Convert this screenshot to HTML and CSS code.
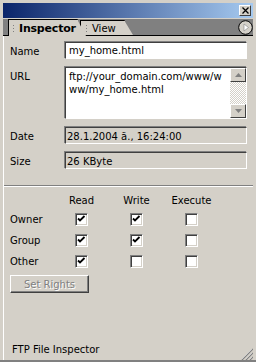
FILE: index.html
```html
<!DOCTYPE html>
<html>
<head>
<meta charset="utf-8">
<link rel="stylesheet" href="styles.css">
</head>
<body>
<div class="window">
  <div class="titlebar">
    <div class="close"><svg width="7" height="7" viewBox="0 0 7 7"><path d="M0.5 0.5 L6.5 6.5 M6.5 0.5 L0.5 6.5" stroke="#000" stroke-width="1.3"/></svg></div>
  </div>
  <div class="tabstrip">
    <div class="tab active"><span class="grip"></span>Inspector</div>
    <div class="tab inactive"><span class="grip"></span>View</div>
    <div class="spacer"></div>
    <div class="menu-btn"><svg width="15" height="15" viewBox="0 0 15 15"><circle cx="7.5" cy="7.5" r="6.8" fill="#d4d0c8" stroke="#000" stroke-width="1"/><path d="M6 4 L10.5 7.5 L6 11 Z" fill="#fff" stroke="#808080" stroke-width="0.6"/></svg></div>
  </div>
  <div class="panel">
    <div class="row">
      <div class="label">Name</div>
      <div class="field input">my_home.html</div>
    </div>
    <div class="row">
      <div class="label">URL</div>
      <div class="field textarea">
        <div class="ta-text">ftp://your_domain.com/www/w<br>ww/my_home.html</div>
        <div class="scroll">
          <div class="sbtn"><svg width="7" height="4" viewBox="0 0 7 4"><path d="M3.5 0 L7 4 L0 4 Z" fill="#808080"/></svg></div>
          <div class="track"></div>
          <div class="sbtn"><svg width="7" height="4" viewBox="0 0 7 4"><path d="M0 0 L7 0 L3.5 4 Z" fill="#808080"/></svg></div>
        </div>
      </div>
    </div>
    <div class="row">
      <div class="label">Date</div>
      <div class="field ro">28.1.2004 ã., 16:24:00</div>
    </div>
    <div class="row">
      <div class="label">Size</div>
      <div class="field ro">26 KByte</div>
    </div>
    <div class="sep"></div>
    <div class="perms">
      <div></div><div class="hd">Read</div><div class="hd">Write</div><div class="hd">Execute</div>
      <div class="rl">Owner</div><div class="cb on"></div><div class="cb on"></div><div class="cb"></div>
      <div class="rl">Group</div><div class="cb on"></div><div class="cb on"></div><div class="cb"></div>
      <div class="rl">Other</div><div class="cb on"></div><div class="cb"></div><div class="cb"></div>
    </div>
    <div class="btn">Set Rights</div>
    <div class="grow"></div>
    <div class="status">FTP File Inspector</div>
    <div class="grip-corner"><svg width="12" height="12" viewBox="0 0 12 12"><path d="M11 1 L1 11 M11 5 L5 11 M11 9 L9 11" stroke="#fff" stroke-width="1"/><path d="M12 1 L1 12 M12 5 L5 12 M12 9 L9 12" stroke="#808080" stroke-width="1.2"/></svg></div>
  </div>
</div>
</body>
</html>
```
FILE: styles.css
```css
html, body {
  margin: 0;
  padding: 0;
  background: #d4d0c8;
}
body {
  width: 256px;
  height: 362px;
  font-family: "DejaVu Sans", sans-serif;
  font-size: 10px;
  line-height: 13px;
  color: #000;
}
.window {
  box-sizing: border-box;
  width: 256px;
  height: 362px;
  padding: 3px 3px 0 3px;
  display: flex;
  flex-direction: column;
  border-bottom: 2px solid #808080;
}
.titlebar {
  height: 15px;
  background: linear-gradient(to right, #0a246a, #a6caf0);
  display: flex;
  justify-content: flex-end;
  align-items: center;
  padding-right: 2px;
  flex: none;
}
.close {
  width: 10px;
  height: 9px;
  background: #d4d0c8;
  border-top: 1px solid #fff;
  border-left: 1px solid #fff;
  border-right: 1px solid #404040;
  border-bottom: 1px solid #404040;
  display: flex;
  align-items: center;
  justify-content: center;
}
.tabstrip {
  margin-top: 1px;
  height: 16px;
  background: #808080;
  border-bottom: 1px solid #000;
  display: flex;
  align-items: flex-end;
  padding-left: 5px;
  flex: none;
  position: relative;
}
.tab {
  position: relative;
  height: 14px;
  background: #d4d0c8;
  border-top: 1px solid #000;
  border-left: 1px solid #000;
  display: flex;
  align-items: center;
  padding-left: 3px;
  font-size: 11px;
}
.tab.active {
  font-weight: bold;
  width: 66px;
  z-index: 2;
  height: 16px;
  margin-bottom: -1px;
  letter-spacing: -0.2px;
}
.tab.active::after, .tab.inactive::after {
  content: "";
  position: absolute;
  top: -1px;
  right: -8px;
  width: 9px;
  height: 100%;
  background: #d4d0c8;
  border-top: 1px solid #000;
  clip-path: polygon(0 0, 0 100%, 100% 100%, 0 0);
}
.tab.inactive {
  width: 40px;
  margin-left: 2px;
  padding-left: 4px;
  font-size: 10px;
}
.grip {
  width: 3px;
  height: 9px;
  margin-right: 4px;
  background-image: radial-gradient(circle, #808080 0.8px, transparent 1px);
  background-size: 3px 3px;
}
.spacer { flex: 1; }
.menu-btn {
  align-self: center;
  margin-right: 0;
  height: 15px;
}
.panel {
  flex: 1;
  display: flex;
  flex-direction: column;
  border-left: 1px solid #fff;
  padding: 6px 6px 2px 6px;
  position: relative;
}
.row {
  display: flex;
  align-items: flex-start;
  margin-bottom: 8px;
}
.label {
  width: 55px;
  padding-top: 3px;
}
.field {
  flex: 1;
  box-sizing: border-box;
  border-top: 1px solid #404040;
  border-left: 1px solid #404040;
  border-right: 1px solid #fff;
  border-bottom: 1px solid #fff;
  box-shadow: -1px -1px 0 #808080, 1px 1px 0 #d4d0c8;
  padding: 1px 3px;
  height: 17px;
  white-space: nowrap;
  overflow: hidden;
}
.input, .textarea { background: #fff; }
.textarea {
  height: 52px;
  display: flex;
  padding: 0;
}
.ta-text {
  flex: 1;
  padding: 2px 3px;
  line-height: 13px;
}
.scroll {
  width: 16px;
  display: flex;
  flex-direction: column;
}
.sbtn {
  height: 14px;
  box-sizing: border-box;
  background: #d4d0c8;
  border-top: 1px solid #fff;
  border-left: 1px solid #fff;
  border-right: 1px solid #404040;
  border-bottom: 1px solid #404040;
  display: flex;
  align-items: center;
  justify-content: center;
}
.track {
  flex: 1;
  background-color: #fff;
  background-image: conic-gradient(#d4d0c8 25%, #fff 0 50%, #d4d0c8 0 75%, #fff 0);
  background-size: 2px 2px;
}
.ro { background: #d4d0c8; padding: 2px 1px 1px 1px; }
.sep {
  height: 0;
  border-top: 1px solid #808080;
  border-bottom: 1px solid #fff;
  margin: 8px -6px 7px -6px;
}
.perms {
  display: grid;
  grid-template-columns: 44px 55px 55px 55px;
  grid-template-rows: 15px 21px 21px 21px;
  align-items: center;
  justify-items: center;
}
.perms .rl { justify-self: start; }
.perms .hd { align-self: start; }
.cb {
  width: 13px;
  height: 13px;
  box-sizing: border-box;
  background: #fff;
  border-top: 1px solid #808080;
  border-left: 1px solid #808080;
  border-right: 1px solid #fff;
  border-bottom: 1px solid #fff;
  box-shadow: inset 1px 1px 0 #404040, inset -1px -1px 0 #d4d0c8;
}
.cb.on {
  background-image: url("data:image/svg+xml,%3Csvg xmlns='http://www.w3.org/2000/svg' width='11' height='11'%3E%3Cpath d='M2 4.5 L4 6.5 L8.5 2' fill='none' stroke='%23000' stroke-width='1.8'/%3E%3C/svg%3E");
  background-position: 0 0;
  background-repeat: no-repeat;
}
.btn {
  margin-top: 3px;
  width: 79px;
  height: 18px;
  box-sizing: border-box;
  color: #808080;
  text-shadow: 1px 1px 0 #fff;
  border-top: 1px solid #fff;
  border-left: 1px solid #fff;
  border-right: 1px solid #404040;
  border-bottom: 1px solid #404040;
  box-shadow: inset -1px -1px 0 #808080;
  display: flex;
  align-items: center;
  justify-content: center;
}
.grow { flex: 1; }
.status {
  padding-left: 2px;
  margin-bottom: 2px;
}
.grip-corner {
  position: absolute;
  right: 0;
  bottom: 0;
  width: 12px;
  height: 12px;
}
```
